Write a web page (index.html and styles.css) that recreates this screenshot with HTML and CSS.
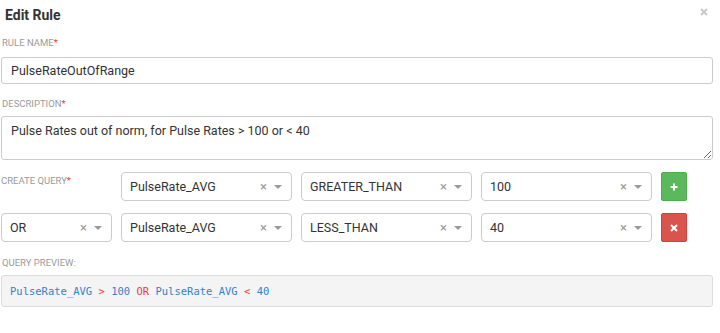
FILE: index.html
```html
<!DOCTYPE html>
<html>
<head>
<meta charset="utf-8">
<link rel="stylesheet" href="styles.css">
</head>
<body>
<div class="modal">
  <div class="header">
    <h1 class="title">Edit Rule</h1>
    <span class="close"><svg width="8" height="8" viewBox="0 0 8 8"><path d="M1 1L7 7M7 1L1 7" stroke="#c9c9c9" stroke-width="2"/></svg></span>
  </div>
  <div class="label l-name">RULE NAME<span class="req">*</span></div>
  <div class="input">PulseRateOutOfRange</div>
  <div class="label l-desc">DESCRIPTION<span class="req">*</span></div>
  <textarea class="textarea">Pulse Rates out of norm, for Pulse Rates &gt; 100 or &lt; 40</textarea>
  <div class="query">
    <div class="label qlabel">CREATE QUERY<span class="req">*</span></div>
    <div class="select"><span class="val">PulseRate_AVG</span><span class="clr">×</span><span class="arrow"></span></div>
    <div class="select"><span class="val">GREATER_THAN</span><span class="clr">×</span><span class="arrow"></span></div>
    <div class="select"><span class="val">100</span><span class="clr">×</span><span class="arrow"></span></div>
    <div class="btn add"><svg width="8" height="8" viewBox="0 0 8 8"><path d="M4 0.5V7.5M0.5 4H7.5" stroke="#fff" stroke-width="2"/></svg></div>

    <div class="select"><span class="val">OR</span><span class="clr">×</span><span class="arrow"></span></div>
    <div class="select"><span class="val">PulseRate_AVG</span><span class="clr">×</span><span class="arrow"></span></div>
    <div class="select"><span class="val">LESS_THAN</span><span class="clr">×</span><span class="arrow"></span></div>
    <div class="select"><span class="val">40</span><span class="clr">×</span><span class="arrow"></span></div>
    <div class="btn del"><svg width="8" height="8" viewBox="0 0 8 8"><path d="M1 1L7 7M7 1L1 7" stroke="#fff" stroke-width="2"/></svg></div>
  </div>
  <div class="label l-prev">QUERY PREVIEW:</div>
  <div class="preview"><span class="id">PulseRate_AVG</span> <span class="op">&gt;</span> <span class="id">100</span> <span class="op">OR</span> <span class="id">PulseRate_AVG</span> <span class="op">&lt;</span> <span class="id">40</span></div>
</div>
</body>
</html>
```
FILE: styles.css
```css
html, body {
  margin: 0;
  padding: 0;
  background: #fff;
}
.modal {
  width: 712px;
  padding: 0 1px;
  display: flex;
  flex-direction: column;
  font-family: Roboto, "Liberation Sans", sans-serif;
  color: #333;
}
.header {
  height: 30px;
  display: flex;
  align-items: center;
  justify-content: space-between;
}
.title {
  margin: 0 0 0 4px;
  font-size: 14px;
  font-weight: 700;
  color: #333;
}
.close {
  display: flex;
  margin: -6px 5px 0 0;
}
.label {
  font-size: 9.5px;
  color: #9a9a9a;
  text-transform: uppercase;
  line-height: 12px;
}
.req {
  color: #e53935;
}
.l-name {
  margin-top: 7px;
  margin-left: 1px;
}
.input {
  margin-top: 8px;
  height: 25px;
  border: 1px solid #ccc;
  border-radius: 3px;
  padding-left: 9px;
  font-size: 12.5px;
  line-height: 25px;
}
.l-desc {
  margin-top: 14px;
  margin-left: 1px;
}
.textarea {
  margin: 6px 0 0;
  box-sizing: border-box;
  width: 712px;
  height: 44px;
  border: 1px solid #ccc;
  border-radius: 3px;
  padding: 6px 9px;
  font-family: Roboto, "Liberation Sans", sans-serif;
  font-size: 12.5px;
  color: #333;
  resize: vertical;
  outline: none;
}
.query {
  margin-top: 12px;
  display: grid;
  grid-template-columns: 111px 171px 171px 171px 26px;
  column-gap: 9px;
  row-gap: 12px;
}
.qlabel {
  padding-top: 3px;
}
.select {
  box-sizing: border-box;
  height: 29px;
  border: 1px solid #ccc;
  border-radius: 4px;
  display: flex;
  align-items: center;
  padding: 0 9px 0 8px;
  font-size: 12.5px;
  color: #333;
}
.val {
  flex: 1;
}
.clr {
  color: #999;
  font-size: 13px;
  margin-right: 7px;
}
.arrow {
  width: 0;
  height: 0;
  border-left: 4px solid transparent;
  border-right: 4px solid transparent;
  border-top: 4px solid #999;
}
.btn {
  height: 29px;
  border-radius: 2px;
  display: flex;
  align-items: center;
  justify-content: center;
  box-sizing: border-box;
}
.add {
  background: #5cb85c;
  border: 1px solid #4cae4c;
}
.del {
  background: #d9534f;
  border: 1px solid #d43f3a;
}
.l-prev {
  margin-top: 15px;
  margin-left: 1px;
}
.preview {
  margin-top: 6px;
  height: 30px;
  border: 1px solid #ddd;
  border-radius: 3px;
  background: #f4f4f4;
  padding-left: 8px;
  font-family: "DejaVu Sans Mono", monospace;
  font-size: 10.5px;
  line-height: 30px;
  white-space: pre;
}
.id {
  color: #3a7fc1;
}
.op {
  color: #f03c3c;
}
```
